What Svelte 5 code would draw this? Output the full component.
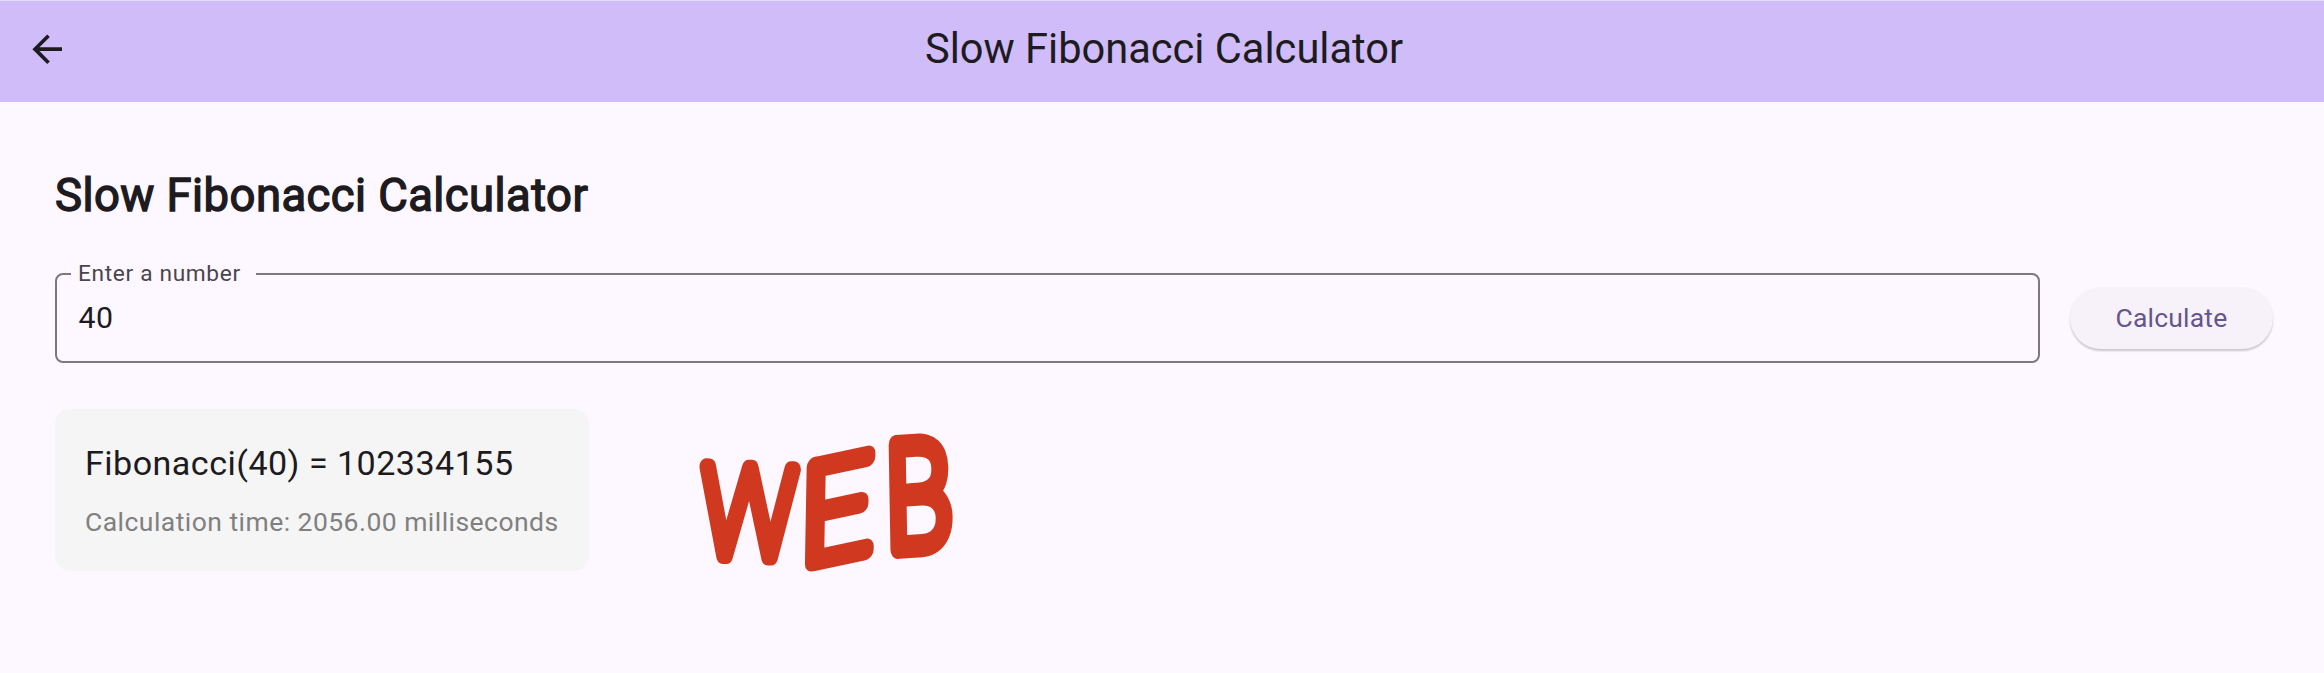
<script>
  let number = $state('40');
</script>

<div class="page">
  <header>
    <button class="back" aria-label="Back">
      <svg viewBox="0 0 24 24"><path d="M7.825 13l5.6 5.6L12 20l-8-8 8-8 1.425 1.4-5.6 5.6H20v2z" /></svg>
    </button>
    <span class="title">Slow Fibonacci Calculator</span>
  </header>
  <main>
    <h1>Slow Fibonacci Calculator</h1>
    <div class="row">
      <fieldset>
        <legend>Enter a number</legend>
        <div class="value">{number}</div>
      </fieldset>
      <button class="calc">Calculate</button>
    </div>
    <div class="results">
      <section>
        <div class="l1">Fibonacci(40) = 102334155</div>
        <div class="l2">Calculation time: 2056.00 milliseconds</div>
      </section>
      <svg class="mark" viewBox="0 0 290 170">
        <text transform="translate(20 135) rotate(2) scale(.8 .96)">W</text>
        <text transform="translate(121 145) rotate(-12) skewX(-13) scale(.96 1.02)">E</text>
        <text transform="translate(207 130) rotate(-4) skewX(-3) scale(.83 1.13)">B</text>
      </svg>
    </div>
  </main>
</div>

<style>
  :global(body) { background: #fdf8ff; }
  .page { box-sizing: border-box; height: 673px; overflow: hidden; background: #fdf8ff; font-family: Roboto, sans-serif; color: #1d1b20; }
  header { box-sizing: border-box; height: 102px; background: #cfbcf8; border-top: 1px solid #e6dcfb; display: grid; grid-template-columns: 92px 1fr 92px; align-items: center; padding-bottom: 5px; }
  button { font-family: inherit; border: 0; padding: 0; background: none; }
  .back { display: flex; padding-left: 25px; }
  .back svg { width: 44.4px; height: 44.4px; fill: #1d1b20; }
  .title { font-size: 41.6px; padding-left: 4px; margin-top: -1px; text-align: center; }
  main { padding: 67px 51px 0 55px; }
  h1 { margin: 0; font-size: 45.4px; line-height: 54px; letter-spacing: .46px; font-weight: 400; -webkit-text-stroke: 1.4px #1d1b20; width: max-content; }
  .row { display: flex; gap: 30px; align-items: flex-start; margin-top: 37px; }
  fieldset { box-sizing: border-box; flex: 1; margin: 0; height: 103px; border: 2px solid #7c7781; border-radius: 8px; padding: 0 21.5px; }
  legend { font-size: 22.7px; line-height: 26px; padding: 1px 15px 0 7px; margin-left: -7.5px; color: #49454f; letter-spacing: .66px; }
  .value { font-size: 30.3px; letter-spacing: .5px; line-height: 40px; padding-top: 11px; }
  .calc { width: 203px; height: 62px; margin-top: 27px; padding-bottom: 2px; border-radius: 31px; background: #f7f2fa; color: #65558f; font-size: 26.5px; letter-spacing: .19px; box-shadow: 0 2px 2px rgba(0,0,0,.2); }
  .results { display: flex; margin-top: 46px; }
  section { box-sizing: border-box; width: 534px; height: 162px; border-radius: 15px; background: #f5f5f5; padding: 34px 30px 0; white-space: nowrap; }
  .l1 { font-size: 34.1px; line-height: 40px; letter-spacing: .47px; }
  .l2 { font-size: 26.5px; line-height: 32px; letter-spacing: .46px; margin-top: 23px; color: #808080; }
  .mark { width: 290px; height: 170px; margin: 11px 0 0 91px; overflow: visible; }
  .mark text { font: 100 130px Roboto, sans-serif; fill: #d0391f; stroke: #d0391f; stroke-width: 17; stroke-linejoin: round; stroke-linecap: round; }
</style>
